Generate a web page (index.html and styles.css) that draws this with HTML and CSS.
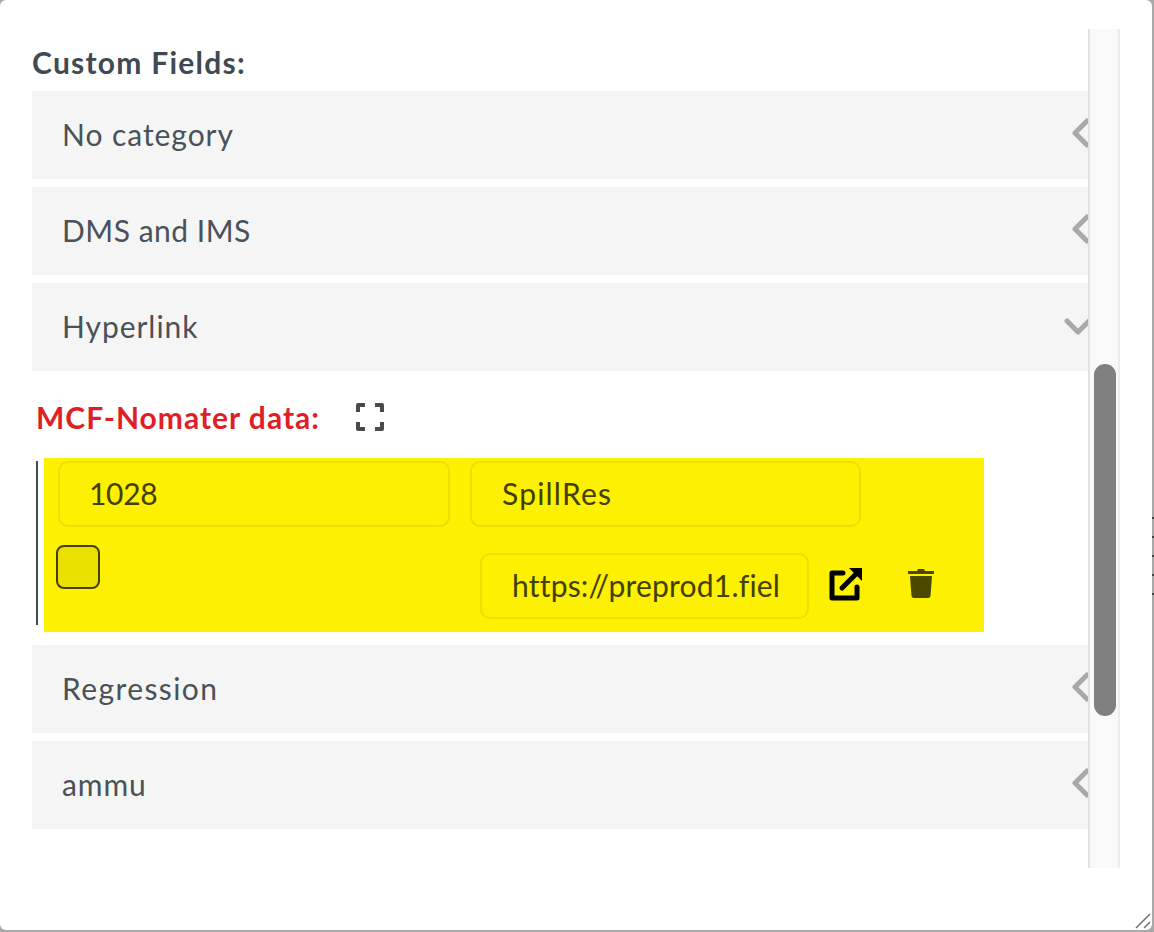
FILE: index.html
```html
<!DOCTYPE html>
<html>
<head>
  <title>Custom Fields</title>
  <link rel="stylesheet" href="styles.css">
</head>
<body>
  <div class="modal">
    <div class="content">
      <h3 class="heading">Custom Fields:</h3>
      <div class="acc-row">
        <span>No category</span>
        <svg class="chev" width="20" height="30" viewBox="0 0 20 30"><path d="M17 3 L5 15 L17 27" /></svg>
      </div>
      <div class="acc-row">
        <span class="tight">DMS and IMS</span>
        <svg class="chev" width="20" height="30" viewBox="0 0 20 30"><path d="M17 3 L5 15 L17 27" /></svg>
      </div>
      <div class="acc-row">
        <span>Hyperlink</span>
        <svg class="chev-down" width="30" height="20" viewBox="0 0 30 20"><path d="M3 4 L14 15 L25 4" /></svg>
      </div>

      <div class="panel">
        <div class="panel-title">
          <span>MCF-Nomater data:</span>
          <svg class="expand" width="28" height="28" viewBox="0 0 28 28"><path d="M2 9 V2 H9 M19 2 H26 V9 M26 19 V26 H19 M9 26 H2 V19" /></svg>
        </div>
        <div class="bar-wrap">
          <div class="highlight">
            <div class="line line-one">
              <div class="field field-a">1028</div>
              <div class="field field-b">SpillRes</div>
            </div>
            <div class="line line-two">
              <div class="check"></div>
              <div class="field field-c">https://preprod1.fiel</div>
              <svg class="open-icon" width="34" height="34" viewBox="0 0 34 34"><path d="M14 6 H3 V31 H28 V20" /><path d="M13 21 L29 5" /><path class="fill" d="M20 1 H33 V14 Z" /></svg>
              <svg class="trash-icon" width="28" height="32" viewBox="0 0 28 32"><path d="M1 5 H10 L11 3 H17 L18 5 H27 V8 H1 Z M3 10 H25 L23.5 30 Q23.4 32 21 32 H7 Q4.6 32 4.5 30 Z" /></svg>
            </div>
          </div>
        </div>
      </div>

      <div class="acc-row">
        <span class="wide">Regression</span>
        <svg class="chev" width="20" height="30" viewBox="0 0 20 30"><path d="M17 3 L5 15 L17 27" /></svg>
      </div>
      <div class="acc-row">
        <span>ammu</span>
        <svg class="chev" width="20" height="30" viewBox="0 0 20 30"><path d="M17 3 L5 15 L17 27" /></svg>
      </div>
    </div>

    <div class="track"><div class="thumb"></div></div>
    <svg class="grip" width="16" height="16" viewBox="0 0 16 16"><path d="M1 15 L15 1 M9 15 L15 9" /></svg>
  </div>
  <div class="ticks"><i></i><i></i><i></i><i></i><i></i></div>
</body>
</html>
```

FILE: styles.css
```css
html, body {
  margin: 0;
  padding: 0;
}
body {
  width: 1154px;
  height: 932px;
  overflow: hidden;
  background: #a9a9a9;
  font-family: Lato, "Open Sans", sans-serif;
  color: #4a5158;
  position: relative;
}
.modal {
  width: 1152px;
  height: 930px;
  background: #fff;
  border-radius: 6px;
  position: relative;
  overflow: hidden;
}
.content {
  padding: 45px 0 0 32px;
  width: 1056px;
}
.heading {
  margin: 0;
  height: 46px;
  line-height: 34px;
  font-size: 30px;
  font-weight: 700;
  letter-spacing: 1.25px;
  color: #3f4a52;
}
.acc-row {
  height: 88px;
  margin-bottom: 8px;
  background: #f5f5f5;
  padding: 0 0 3px 30px;
  box-sizing: border-box;
  display: flex;
  align-items: center;
  justify-content: space-between;
  font-size: 30px;
  letter-spacing: 0.95px;
  overflow: hidden;
}
.acc-row .tight {
  letter-spacing: 0.5px;
}
.acc-row .wide {
  letter-spacing: 1.4px;
}
.chev, .chev-down {
  fill: none;
  stroke: #a9a9a9;
  stroke-width: 5;
  stroke-linecap: round;
  stroke-linejoin: round;
  flex: none;
}
.chev {
  margin-right: -2px;
  margin-bottom: 1px;
}
.chev-down {
  margin-right: -6px;
  margin-top: 2px;
}
.panel {
  height: 274px;
  margin-top: -8px;
}
.panel-title {
  display: flex;
  align-items: center;
  height: 91px;
  padding-left: 4px;
  gap: 36px;
  color: #df1f26;
  font-size: 30px;
  font-weight: 700;
  letter-spacing: 1px;
}
.expand {
  fill: none;
  stroke: #4a4a4a;
  stroke-width: 4;
  stroke-linejoin: round;
  margin-top: 1px;
}
.bar-wrap {
  margin-left: 4px;
  border-left: 2px solid #434b5a;
  height: 164px;
  margin-top: 2px;
}
.highlight {
  width: 940px;
  height: 174px;
  margin-left: 6px;
  margin-top: -3px;
  background: #fdf000;
  position: relative;
  top: -3px;
  color: #423f00;
  padding: 3px 0 0 12px;
  box-sizing: border-box;
}
.line {
  display: flex;
}
.line-one {
  height: 66px;
  gap: 20px;
  margin-left: 2px;
}
.line-two {
  margin-top: 18px;
  align-items: flex-start;
}
.field {
  box-sizing: border-box;
  height: 66px;
  line-height: 60px;
  border: 2px solid #ebe000;
  border-radius: 10px;
  padding-left: 30px;
  font-size: 30px;
  white-space: nowrap;
  overflow: hidden;
}
.field-a {
  width: 392px;
  padding-left: 29px;
  letter-spacing: -0.3px;
}
.field-b {
  width: 391px;
  letter-spacing: 1.2px;
}
.field-c {
  width: 329px;
  margin-top: 8px;
  margin-left: 380px;
  letter-spacing: 0.2px;
}
.check {
  box-sizing: border-box;
  width: 44px;
  height: 44px;
  border: 2px solid #423f00;
  border-radius: 8px;
  background: #ebe000;
}
.open-icon {
  margin: 22px 0 0 20px;
  flex: none;
}
.open-icon path {
  fill: none;
  stroke: #000;
  stroke-width: 5;
  stroke-linejoin: round;
  stroke-linecap: round;
}
.open-icon .fill {
  fill: #000;
  stroke: none;
}
.trash-icon {
  margin: 21px 0 0 44px;
  flex: none;
  fill: #4c4800;
}
.track {
  position: absolute;
  left: 1088px;
  top: 29px;
  width: 32px;
  height: 839px;
  box-sizing: border-box;
  background: #f9f9f9;
  border-left: 2px solid #e2e2e2;
  border-right: 2px solid #ececec;
}
.thumb {
  position: absolute;
  left: 4px;
  top: 335px;
  width: 22px;
  height: 352px;
  background: #808080;
  border-radius: 11px;
}
.grip {
  position: absolute;
  right: 1px;
  bottom: 1px;
  fill: none;
  stroke: #6e6e6e;
  stroke-width: 1.5;
}
.ticks {
  position: absolute;
  right: 0;
  top: 517px;
  width: 2px;
  display: flex;
  flex-direction: column;
  gap: 17px;
}
.ticks i {
  display: block;
  height: 2px;
  background: #444;
}
```
